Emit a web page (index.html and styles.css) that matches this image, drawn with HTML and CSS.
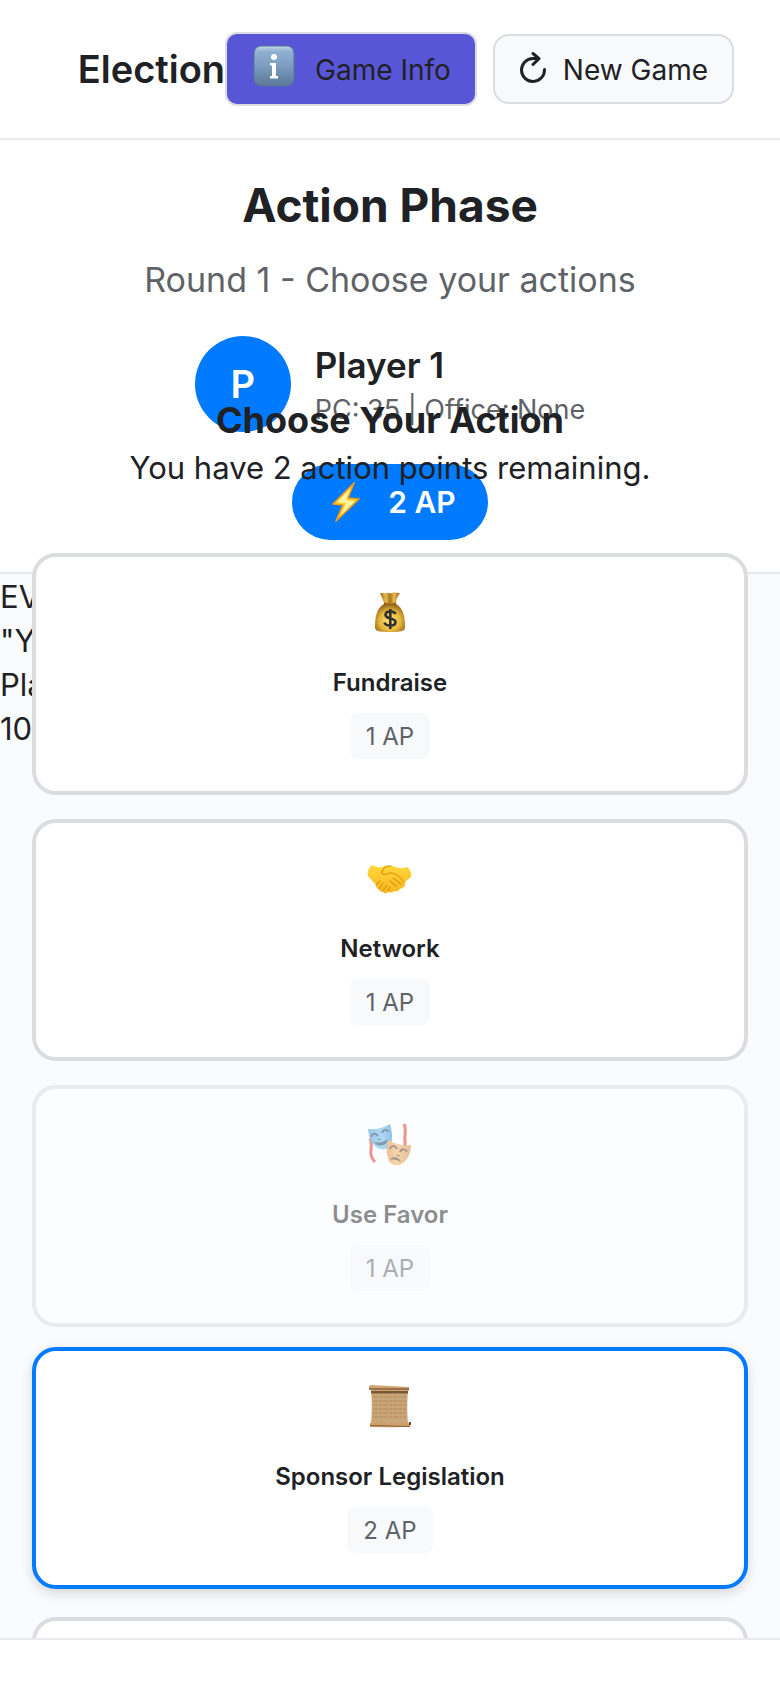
FILE: index.html
```html
<!DOCTYPE html>
<html lang="en">
<head>
<meta charset="utf-8">
<meta name="viewport" content="width=device-width, initial-scale=1">
<title>Election</title>
<link rel="stylesheet" href="styles.css">
</head>
<body>
<div class="app">
  <header class="topbar">
    <h1 class="brand">Election</h1>
    <div class="topbar-actions">
      <button class="btn btn-info" type="button">
        <svg class="info-icon" viewBox="0 0 42 42" aria-hidden="true">
          <defs><linearGradient id="tile" x1="0" y1="0" x2="0" y2="1"><stop offset="0" stop-color="#c3d6e8"/><stop offset=".14" stop-color="#8fb0d0"/><stop offset=".5" stop-color="#7b9dbf"/><stop offset="1" stop-color="#5c7896"/></linearGradient></defs>
          <rect x="1" y="1" width="40" height="40" rx="7" fill="url(#tile)" stroke="#54749a" stroke-width="1"/>
          <circle cx="21" cy="12" r="3" fill="#fff"/>
          <path d="M17 18h6v13h2v2.500h-8V31h2V20.500h-2z" fill="#fff"/>
        </svg>
        <span>Game Info</span>
      </button>
      <button class="btn btn-new" type="button">
        <svg class="reload-icon" viewBox="0 0 28 32" aria-hidden="true" fill="none" stroke="#202124" stroke-width="3" stroke-linecap="round" stroke-linejoin="round">
          <path d="M25.500 18.500A11.500 11.500 0 1 1 14 7.500h5.500M14 2.500l6 5.200-6 5.800"/>
        </svg>
        <span>New Game</span>
      </button>
    </div>
  </header>

  <main class="stage">
    <section class="phase">
      <h2 class="phase-title">Action Phase</h2>
      <p class="phase-sub">Round 1 - Choose your actions</p>
      <div class="player">
        <div class="avatar">P</div>
        <div class="player-text">
          <div class="player-name">Player 1</div>
          <div class="player-meta">PC: 35 | Office: None</div>
        </div>
      </div>
      <div class="points">
        <svg class="bolt-icon" viewBox="0 0 28 40" aria-hidden="true">
          <path d="M22 1 1 22l10 1-7 16 23-22-11-1z" fill="#ffd52e" stroke="#f39a13" stroke-width="1.600" stroke-linejoin="round"/>
          <path d="M19 6 5 20l9 1-5 12 14-14-9-1z" fill="#fff3a4"/>
        </svg>
        <span>2 AP</span>
      </div>
    </section>

    <div class="log">
      <p>EV</p>
      <p>"Y</p>
      <p>Pla</p>
      <p>10</p>
    </div>

    <section class="chooser">
      <h3 class="chooser-title">Choose Your Action</h3>
      <p class="chooser-text">You have 2 action points remaining.</p>
      <div class="cards">
        <button class="card" type="button">
          <svg class="card-icon" viewBox="0 0 48 48" aria-hidden="true">
            <defs>
              <radialGradient id="bag" cx=".5" cy=".6" r=".6"><stop offset="0" stop-color="#ffe47a"/><stop offset=".6" stop-color="#e3b63b"/><stop offset="1" stop-color="#93621a"/></radialGradient>
              <linearGradient id="neck"><stop offset="0" stop-color="#9b671c"/><stop offset=".3" stop-color="#e8bd4c"/><stop offset=".5" stop-color="#a8721f"/><stop offset=".7" stop-color="#e8bd4c"/><stop offset="1" stop-color="#93601a"/></linearGradient>
            </defs>
            <path d="M18 15C11 19 9 27 9 38c0 4 3 5 15 5s15-1 15-5c0-11-2-19-9-23z" fill="url(#bag)"/>
            <path d="M14 4c3 0 4 1 6 0s4 1 6 0 5 0 8 0c-2 3-4 6-4 10-4 2-8 2-12 0-1-4-3-7-4-10z" fill="url(#neck)"/>
            <path d="M18 14c4 2 8 2 12 0" fill="none" stroke="#9a661b" stroke-width="1.500"/>
            <path d="M29.500 25c-1-3-9.500-4-10 .5-.4 5 10 3 10 7.500 0 5-10 4.500-11 .5M24.300 20v20" fill="none" stroke="#33312f" stroke-width="2.600"/>
          </svg>
          <span class="card-label">Fundraise</span>
          <span class="cost">1 AP</span>
        </button>
        <button class="card" type="button">
          <svg class="card-icon" viewBox="0 0 48 48" aria-hidden="true">
            <defs><linearGradient id="hand" x1="0" y1="0" x2="0" y2="1"><stop offset="0" stop-color="#ffd83c"/><stop offset="1" stop-color="#f8b51c"/></linearGradient></defs>
            <path d="M6 10c4 2 7 3 10 2 4-2 9-2 13 0 4 1 7 2 12 0 3 2 5 6 4 10l-6 5c1 4-2 6-5 7-2 2-4 3-6 2-2 2-5 2-6 0 0 3-3 3-5 1-2 0-4-1-4-3-2 0-3-2-3-4L2 21c-1-4 1-9 4-11z" fill="url(#hand)"/>
            <path d="M25 11c-4 0-7 1-8 4-2 2-2 3 0 4 3 2 6-2 9-1 5 1 9 5 12 9M27 23l8 6M24 26l6 5M10 30l4-4M13 34l4-6M17 36l4-6M22 36l2-4" fill="none" stroke="#dd9412" stroke-width="1.200" stroke-linecap="round"/>
          </svg>
          <span class="card-label">Network</span>
          <span class="cost">1 AP</span>
        </button>
        <button class="card" type="button" disabled>
          <svg class="card-icon" viewBox="0 0 48 48" aria-hidden="true">
            <defs>
              <linearGradient id="comic"><stop offset="0" stop-color="#3d8fd6"/><stop offset=".6" stop-color="#5fbbee"/><stop offset="1" stop-color="#2f86cc"/></linearGradient>
              <linearGradient id="tragic"><stop offset="0" stop-color="#d98a35"/><stop offset=".4" stop-color="#f2b35c"/><stop offset="1" stop-color="#cf8440"/></linearGradient>
            </defs>
            <path d="M4 17c3 6 0 12 1 17 1 4 2 5 4 7M38 3c3 6 0 11 1 17v6" fill="none" stroke="#d9301f" stroke-width="3"/>
            <path d="M2 8c8 1 15-1 22-5 2 7 3 14 1 20-3 5-8 7-13 4C5 23 3 16 2 8z" fill="url(#comic)"/>
            <path d="M5 16c1-4 5-4 7-1M16 12c1-4 5-4 6-1" fill="none" stroke="#173c5e" stroke-width="2"/>
            <path d="M12 19l3-1" stroke="#173c5e"/>
            <path d="M8 21c5 1 10 0 14-3-1 7-10 9-14 3z" fill="#173c5e"/>
            <path d="M22 19c7 4 15 6 23 5 0 9-4 17-12 20-5 1-10-1-11-7-2-6-2-12 0-18z" fill="url(#tragic)"/>
            <path d="M24 28c1-4 5-4 7 0M34 31c2-4 6-3 7 0" fill="none" stroke="#59351a" stroke-width="2"/>
            <path d="M30 34l4 1" stroke="#59351a"/>
            <path d="M24 39c2-5 9-3 11 2-4-2-7-3-11-2z" fill="#59351a"/>
          </svg>
          <span class="card-label">Use Favor</span>
          <span class="cost">1 AP</span>
        </button>
        <button class="card card-active" type="button">
          <svg class="card-icon" viewBox="0 0 48 48" aria-hidden="true">
            <path d="M5 7h37c-1 11-1 23 0 34H5C6 29 6 18 5 7z" fill="#c9a577"/>
            <path d="M5 8h37v2.500H5z" fill="#7a5936"/>
            <path d="M7 14h33M7 18h33M7 22h33M7 26h33M7 30h33M7 34h33" stroke="#b08c5d" stroke-dasharray="5 1 3 1"/>
            <path d="M4 2c14 1 26 1 39 2v4c-14 0-26 0-40-1V4z" fill="#d0a473"/>
            <path d="M3 6h40" stroke="#8a633c" stroke-width="1.500"/>
            <path d="M4 40c14 0 26 1 40 0v3c-14 2-26 1-40 1z" fill="#cf9f69"/>
            <path d="M4 42.500c14 0 26 1 40 1" stroke="#8a6038" fill="none"/>
            <path d="M43 39h2v3h-2z" fill="#6d4a28"/>
          </svg>
          <span class="card-label">Sponsor Legislation</span>
          <span class="cost">2 AP</span>
        </button>
        <button class="card" type="button"><span class="card-icon"></span></button>
      </div>
    </section>
  </main>

  <footer class="bottombar"></footer>
</div>
</body>
</html>
```
FILE: styles.css
```css
* { box-sizing: border-box; }

body {
  margin: 0;
  background: #fff;
  color: #202124;
  font-family: Inter, "Liberation Sans", sans-serif;
}

h1, h2, h3, p { margin: 0; }

button {
  font: inherit;
  color: inherit;
}

.app {
  display: flex;
  flex-direction: column;
  height: 100vh;
}

.topbar {
  display: flex;
  justify-content: flex-end;
  align-items: center;
  padding: 32px 46px;
  border-bottom: 2px solid #e8eaed;
}

.brand {
  font-size: 38px;
  line-height: 48px;
  font-weight: 600;
}

.topbar-actions {
  display: flex;
  align-items: center;
  gap: 16px;
}

.btn {
  display: flex;
  align-items: center;
  border: 2px solid #dadce0;
  font-size: 28px;
  font-weight: 400;
  line-height: 36px;
  white-space: nowrap;
}

.btn span { padding-top: 2px; }

.btn-info {
  gap: 20px;
  height: 74px;
  padding: 0 24px 0 26px;
  border-radius: 12px;
  background: #5856d6;
}

.info-icon {
  width: 42px;
  height: 42px;
  margin-bottom: 6px;
}

.btn-new {
  gap: 16px;
  height: 70px;
  padding: 0 24px;
  border-radius: 16px;
  background: #f8f9fb;
}

.reload-icon {
  width: 28px;
  height: 32px;
  margin-bottom: 4px;
}

.stage {
  position: relative;
  flex: 1;
  min-height: 0;
  overflow: hidden;
  background: #fafbfd;
}

.phase {
  display: flex;
  flex-direction: column;
  align-items: center;
  padding: 32px;
  background: #fff;
  border-bottom: 2px solid #e8eaed;
}

.phase-title {
  margin-bottom: 17px;
  font-size: 46px;
  line-height: 66px;
  font-weight: 700;
}

.phase-sub {
  margin-bottom: 31px;
  font-size: 34px;
  line-height: 50px;
  color: #5f6368;
}

.player {
  display: flex;
  align-items: center;
  gap: 24px;
  margin-bottom: 32px;
}

.avatar {
  display: flex;
  align-items: center;
  justify-content: center;
  width: 96px;
  height: 96px;
  border-radius: 50%;
  background: #007aff;
  color: #fff;
  font-size: 38px;
  font-weight: 600;
}

.player-name {
  font-size: 35px;
  line-height: 52px;
  font-weight: 600;
}

.player-meta {
  font-size: 27px;
  line-height: 38px;
  color: #5f6368;
}

.points {
  display: flex;
  align-items: center;
  gap: 28px;
  height: 76px;
  padding: 0 32px 0 40px;
  border-radius: 38px;
  background: #007aff;
  color: #fff;
  font-size: 30px;
  font-weight: 600;
}

.bolt-icon {
  width: 28px;
  height: 40px;
}

.log {
  padding-top: 1px;
  font-size: 31px;
  line-height: 44px;
}

.chooser {
  position: absolute;
  top: 254px;
  left: 32px;
  right: 32px;
  text-align: center;
}

.chooser-title {
  font-size: 36px;
  line-height: 52px;
  font-weight: 700;
}

.chooser-text {
  margin-bottom: 63px;
  font-size: 31px;
  line-height: 44px;
}

.cards {
  display: grid;
  gap: 24px;
}

.card {
  display: flex;
  flex-direction: column;
  align-items: center;
  padding: 32px;
  border: 4px solid #dadce0;
  border-radius: 24px;
  background: #fff;
}

.card:disabled { opacity: .5; }

.card-active {
  transform: translateY(-4px);
  border-color: #007aff;
  box-shadow: 0 4px 12px rgba(0, 0, 0, .15);
}

.card-icon {
  width: 48px;
  height: 48px;
  margin-bottom: 28px;
}

.card-label {
  margin-bottom: 12px;
  font-size: 24px;
  line-height: 36px;
  font-weight: 600;
}

.cost {
  padding: 7px 16px 5px;
  border-radius: 8px;
  background: #f8f9fb;
  color: #5f6368;
  font-size: 24px;
  line-height: 34px;
}

.bottombar {
  height: 50px;
  border-top: 2px solid #e8eaed;
  background: #fff;
}
```
